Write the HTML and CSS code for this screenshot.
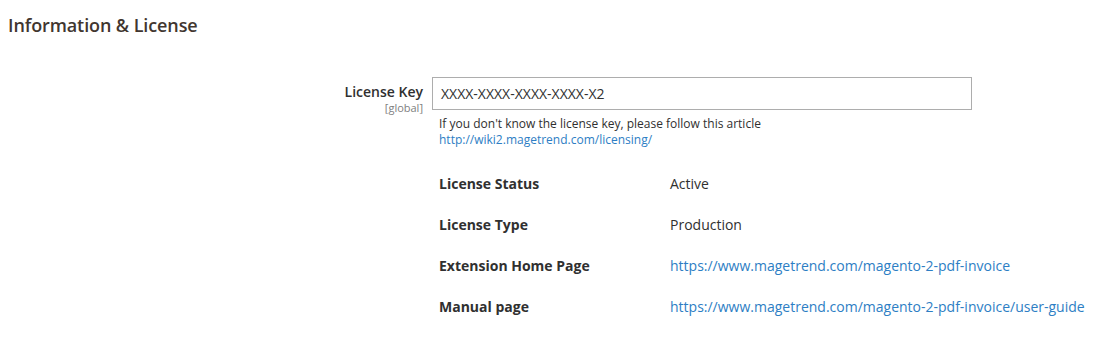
FILE: index.html
```html
<!DOCTYPE html>
<html>
<head>
<meta charset="utf-8">
<link rel="stylesheet" href="styles.css">
</head>
<body>
<div class="section">
  <h2 class="section-title">Information &amp; License</h2>
  <div class="field-row">
    <div class="label-col">
      <div class="label">License Key</div>
      <div class="scope">[global]</div>
    </div>
    <div class="value-col">
      <div class="input">XXXX-XXXX-XXXX-XXXX-X2</div>
      <div class="note">If you don't know the license key, please follow this article<br><a href="#">http://wiki2.magetrend.com/licensing/</a></div>
      <div class="info">
        <div class="info-row"><div class="info-key">License Status</div><div class="info-val">Active</div></div>
        <div class="info-row"><div class="info-key">License Type</div><div class="info-val">Production</div></div>
        <div class="info-row"><div class="info-key">Extension Home Page</div><div class="info-val"><a href="#">https://www.magetrend.com/magento-2-pdf-invoice</a></div></div>
        <div class="info-row"><div class="info-key">Manual page</div><div class="info-val"><a href="#">https://www.magetrend.com/magento-2-pdf-invoice/user-guide</a></div></div>
      </div>
    </div>
  </div>
</div>
</body>
</html>
```

FILE: styles.css
```css
html, body {
  margin: 0;
  padding: 0;
  background: #fff;
}
body {
  font-family: "Open Sans", "Liberation Sans", sans-serif;
  color: #303030;
}
.section {
  padding: 13px 0 0 8px;
}
.section-title {
  margin: 0;
  font-size: 18px;
  font-weight: 600;
  color: #41362f;
  line-height: 24px;
  letter-spacing: -0.1px;
}
.field-row {
  display: flex;
  margin-top: 40px;
}
.label-col {
  width: 415px;
  text-align: right;
  padding-top: 6px;
}
.label {
  font-size: 14px;
  font-weight: 600;
  color: #303030;
  line-height: 18px;
}
.scope {
  font-size: 11px;
  color: #808080;
  line-height: 14px;
}
.value-col {
  margin-left: 9px;
}
.input {
  box-sizing: border-box;
  width: 540px;
  height: 33px;
  border: 1px solid #adadad;
  padding: 0 8px;
  font-size: 14px;
  line-height: 31px;
  color: #303030;
}
.note {
  margin-top: 6px;
  padding-left: 7px;
  font-size: 12px;
  line-height: 16px;
  color: #303030;
}
a {
  color: #2d7ec4;
  text-decoration: none;
}
.info {
  margin-top: 26px;
  padding-left: 7px;
}
.info-row {
  display: flex;
  height: 41px;
  font-size: 14px;
  line-height: 20px;
}
.info-key {
  width: 231px;
  font-weight: 700;
  color: #303030;
}
.info-val {
  color: #303030;
}
```
